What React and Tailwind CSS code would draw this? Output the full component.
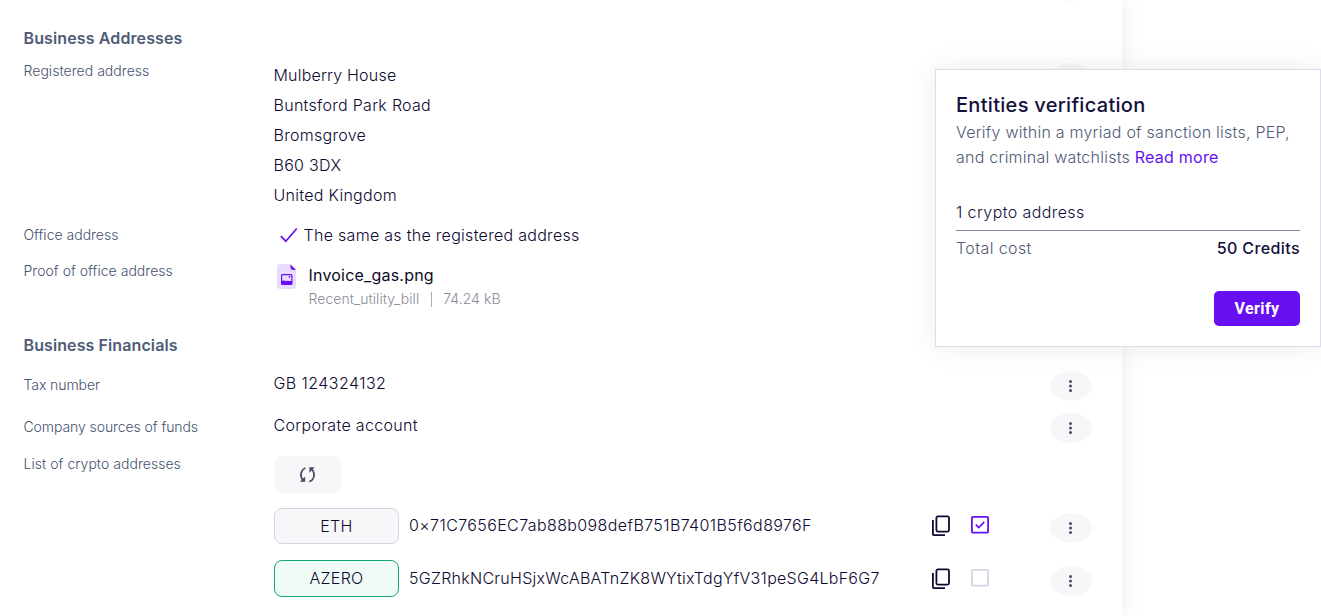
const font = "font-['Inter','Liberation_Sans',sans-serif]";

function Label({ children, className = "" }) {
  return (
    <div className={`w-[250px] shrink-0 text-sm leading-[22px] font-light text-[#465370] ${className}`}>
      {children}
    </div>
  );
}

function MenuButton({ className = "" }) {
  return (
    <button className={`flex h-[30px] w-[42px] shrink-0 items-center justify-center rounded-[50%] bg-[#f7f7fa] ${className}`}>
      <svg width="14" height="14" viewBox="0 0 14 14" fill="#4a4a68">
        <circle cx="6.5" cy="2.5" r="1.5" />
        <circle cx="6.5" cy="7" r="1.5" />
        <circle cx="6.5" cy="11.5" r="1.5" />
      </svg>
    </button>
  );
}

function CopyIcon() {
  return (
    <svg width="20" height="22" viewBox="0 0 20 22" fill="none" stroke="#0d0930" strokeWidth="1.8">
      <rect x="5.4" y="1.4" width="12.6" height="15.2" rx="1.5" />
      <path d="M1.9 5v14.1q0 1 1 1H14" />
    </svg>
  );
}

function Checkbox({ checked }) {
  return (
    <svg width="18" height="18" viewBox="0 0 18 18" fill="none">
      <rect x="0.9" y="0.9" width="16.2" height="15.8" rx="1" stroke={checked ? "#6610f2" : "#d3d5e3"} strokeWidth="1.8" />
      {checked && <path d="M4.8 8.6l2.9 2.9 5.6-5.6" stroke="#6610f2" strokeWidth="1.7" />}
    </svg>
  );
}

function CryptoRow({ symbol, address, active, checked }) {
  return (
    <div className="flex h-[37px] items-start">
      <div
        className={`flex w-[125px] items-center justify-center rounded-lg border text-base font-light tracking-[0.3px] ${
          active ? "h-[37px] border-[#12a873] bg-[#f0faf7] pb-px" : "h-9 border-[#d3d5e3] bg-[#f7f7fa]"
        }`}
      >
        {symbol}
      </div>
      <div className={`flex ${active ? "pt-px" : ""}`}>
        <div
          className={`ml-2.5 w-[522px] pt-[5px] leading-6 whitespace-nowrap ${
            active ? "tracking-[0.270px]" : "tracking-[0.390px]"
          }`}
        >
          {address}
        </div>
        <div className="mt-[7px] w-10"><CopyIcon /></div>
        <div className="mt-2 w-[79px]"><Checkbox checked={checked} /></div>
        <MenuButton className="mt-[5px]" />
      </div>
    </div>
  );
}

function FileIcon() {
  return (
    <svg width="20" height="26" viewBox="0 0 20 26">
      <path d="M3 0h10.5L19 6v16a3 3 0 0 1-3 3H3a3 3 0 0 1-3-3V3a3 3 0 0 1 3-3z" fill="#e8dbfd" />
      <path d="M13.5 0.5V3a3 3 0 0 0 3 3H19z" fill="#6610f2" />
      <rect x="4.6" y="10.6" width="10.3" height="9.8" rx="1" fill="none" stroke="#6610f2" strokeWidth="1.2" />
      <path d="M4.5 17q2.500-1 5.200.200l1.200-.7 1.100.6h3V20q0 1-1 1h-8.500q-1 0-1-1z" fill="#6610f2" />
      <circle cx="12.5" cy="12.8" r="0.9" fill="#6610f2" />
    </svg>
  );
}

function RefreshIcon() {
  return (
    <svg width="18" height="18" viewBox="0 0 18 18" fill="none" stroke="#4a4a68" strokeWidth="1.8">
      <path d="M6.500 2C3 3.200 1.500 7 2 10.200c.3 2 1.300 3.600 2.800 4.800" />
      <path d="M0.800 15.800h5.400V10.400z" fill="#4a4a68" stroke="none" />
      <path d="M10.400 15.600c3.600-1.200 5.100-5 4.600-8.200-.3-2-1.300-3.600-2.800-4.800" />
      <path d="M15.800 1.200h-5.400v5.600z" fill="#4a4a68" stroke="none" />
    </svg>
  );
}

function VerificationCard() {
  return (
    <aside className="absolute top-[69px] left-[935px] h-[278px] w-[386px] border border-[#dddde8] bg-white px-5 pt-[22px] tracking-[0.4px] shadow-[0_0_28px_rgba(0,0,0,0.08)]">
      <h2 className="text-xl leading-[26px] font-medium tracking-[0.3px] text-[#14103c]">Entities verification</h2>
      <p className="mt-[2px] text-base leading-[25px] font-light tracking-[0.240px] whitespace-nowrap text-[#4f5b76]">
        Verify within a myriad of sanction lists, PEP,
        <br />
        and criminal watchlists <a className="font-normal text-[#6610f2]">Read more</a>
      </p>
      <div className="mt-[30px] border-b border-[#7c86b0] pb-[6px] text-base leading-6 font-light text-[#14103c]">
        1 crypto address
      </div>
      <div className="mt-[5px] flex justify-between text-base leading-6">
        <span className="font-light text-[#4f5b76]">Total cost</span>
        <span className="font-medium text-[#14103c]">50 Credits</span>
      </div>
      <div className="mt-[31px] flex justify-end">
        <button className="h-[35px] w-[86px] rounded-[5px] bg-[#6610f2] font-['Roboto',sans-serif] text-base font-bold tracking-[0.4px] text-white">
          Verify
        </button>
      </div>
    </aside>
  );
}

export default function App() {
  return (
    <div className={`relative h-[616px] w-[1321px] overflow-hidden bg-white ${font} text-base font-light tracking-[0.290px] text-[#0d0930]`}>
      <main className="flow-root h-[616px] w-[1122px] bg-white pl-[23.500px] shadow-[0_0_20px_rgba(0,0,0,0.08)]">
        <MenuButton className="-mt-[29px] ml-[1026px]" />
        <h3 className="mt-[25px] text-base leading-6 font-semibold tracking-[0.120px] text-[#4f5b76]">Business Addresses</h3>
        <div className="mt-[10px] flex h-[150px]">
          <Label className="tracking-[0.040px]">Registered address</Label>
          <div className="w-[776.500px] leading-[30px]">
            <div className="tracking-[0.2px]">Mulberry House</div>
            <div>Buntsford Park Road</div>
            <div>Bromsgrove</div>
            <div>B60 3DX</div>
            <div>United Kingdom</div>
          </div>
          <MenuButton className="mt-[3px]" />
        </div>
        <div className="flex h-[50px] items-center">
          <Label className="tracking-normal">Office address</Label>
          <svg className="mr-[6px] ml-[6px]" width="18" height="16" viewBox="0 0 18 16" fill="none" stroke="#6610f2" strokeWidth="1.7">
            <path d="M0.800 9.200l5 5L16.800 1.500" />
          </svg>
          <span>The same as the registered address</span>
        </div>
        <div className="flex h-[73px]">
          <Label className="tracking-[0.030px]">Proof of office address</Label>
          <div className="mt-1 ml-[3.500px] w-[31.500px]"><FileIcon /></div>
          <div className="pt-[3px]">
            <div className="leading-6 font-normal tracking-[0.2px] text-[#0b0b1f]">Invoice_gas.png</div>
            <div className="flex items-center text-sm leading-6 tracking-[0.050px] text-[#8b8b98]">
              Recent_utility_bill
              <span className="mx-[11.500px] h-[15px] w-px bg-[#b5aca6]" />
              74.24 kB
            </div>
          </div>
        </div>
        <h3 className="text-base leading-6 font-semibold tracking-[0.1px] text-[#4f5b76]">Business Financials</h3>
        <div className="mt-[14px] flex h-[42px]">
          <Label className="pt-[3px] tracking-[-0.080px]">Tax number</Label>
          <div className="w-[776.500px] leading-6 tracking-[0.430px]">GB 124324132</div>
          <MenuButton />
        </div>
        <div className="flex h-[40px]">
          <Label className="pt-[3px] tracking-[-0.080px]">Company sources of funds</Label>
          <div className="w-[776.500px] leading-6 tracking-[0.320px]">Corporate account</div>
          <MenuButton />
        </div>
        <div className="flex">
          <Label className="tracking-[0.040px]">List of crypto addresses</Label>
          <div className="pt-[3px] pl-[0.500px]">
            <button className="mb-[15px] flex h-[37px] w-[67px] items-center justify-center rounded-lg bg-[#f7f7fa]">
              <RefreshIcon />
            </button>
            <div className="flex flex-col gap-[15px]">
              <CryptoRow symbol="ETH" address="0×71C7656EC7ab88b098defB751B7401B5f6d8976F" checked />
              <CryptoRow symbol="AZERO" address="5GZRhkNCruHSjxWcABATnZK8WYtixTdgYfV31peSG4LbF6G7" active />
            </div>
          </div>
        </div>
      </main>
      <VerificationCard />
    </div>
  );
}
